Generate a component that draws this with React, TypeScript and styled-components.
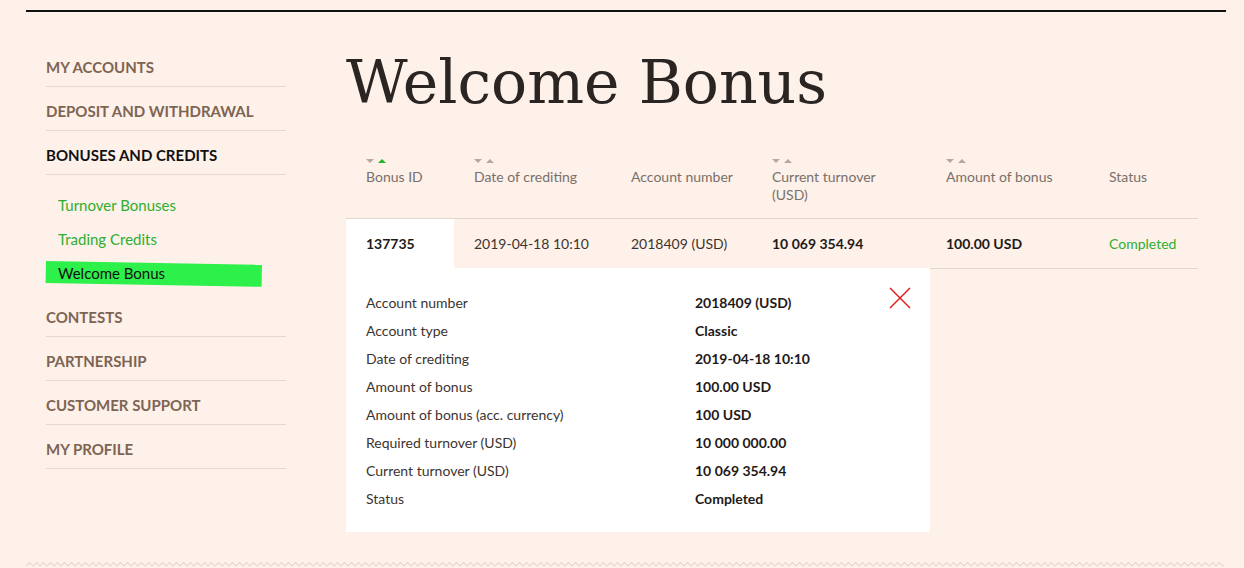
import React from 'react';
import styled, { createGlobalStyle } from 'styled-components';

const GlobalStyle = createGlobalStyle`
    html, body {
        margin: 0;
        background: #fdf1e9;
        font-family: Lato, "Open Sans", sans-serif;
        color: #2b2522;
    }
`;

const Page = styled.div`
    margin: 10px 18px 0 26px;
    border-top: 2px solid #111;
    display: flex;
    flex-direction: column;
`;

const Body = styled.div`
    display: flex;
    padding: 0 0 0 20px;
`;

const Sidebar = styled.nav`
    width: 240px;
    padding-top: 31px;
    flex-shrink: 0;
`;

const MenuItem = styled.div<{ $active?: boolean }>`
    padding: 14px 0 9px;
    line-height: 20px;
    font-size: 15px;
    font-weight: 700;
    text-transform: uppercase;
    color: ${p => (p.$active ? '#111' : '#7d6453')};
    border-bottom: 1px solid #e6d9d0;
`;

const SubMenu = styled.div`
    padding: 13px 0 3px;
`;

const SubItem = styled.div<{ $current?: boolean }>`
    position: relative;
    height: 34px;
    line-height: 34px;
    padding-left: 12px;
    font-size: 15px;
    color: ${p => (p.$current ? '#111' : '#2fae2f')};

    span {
        position: relative;
    }

    ${p =>
        p.$current &&
        `
        &::before {
            content: '';
            position: absolute;
            left: 0;
            top: 5px;
            width: 216px;
            height: 22px;
            background: #2ef04a;
            transform: rotate(1deg);
            transform-origin: left top;
        }
    `}
`;

const Main = styled.main`
    margin-left: 60px;
    width: 852px;
`;

const Title = styled.h1`
    margin: 0;
    padding-top: 30px;
    font-family: "DejaVu Serif", "Liberation Serif", serif;
    font-weight: 400;
    font-size: 60px;
    line-height: 80px;
    color: #2a2523;
`;

const columns = '108px 157px 141px 174px 163px 109px';

const HeadRow = styled.div`
    display: grid;
    grid-template-columns: ${columns};
    padding-top: 34px;
    height: 97px;
    box-sizing: border-box;
    border-bottom: 1px solid #e3d6cd;
`;

const HeadCell = styled.div<{ $narrow?: boolean }>`
    padding-left: 20px;
    font-size: 14px;
    line-height: 18px;
    color: #7a6f69;

    p {
        margin: 0;
        max-width: ${p => (p.$narrow ? '110px' : 'none')};
    }
`;

const Sorter = styled.div`
    display: flex;
    gap: 4px;
    height: 10px;
    margin-bottom: 2px;
    align-items: center;
`;

const Arrow = styled.span<{ $up?: boolean; $on?: boolean }>`
    width: 0;
    height: 0;
    border-left: 4px solid transparent;
    border-right: 4px solid transparent;
    ${p =>
        p.$up
            ? `border-bottom: 4px solid ${p.$on ? '#27b327' : '#b5a8a0'};`
            : `border-top: 4px solid #b5a8a0;`}
`;

const Row = styled.div`
    display: grid;
    grid-template-columns: ${columns};
    height: 49px;
    border-bottom: 1px solid #e3d6cd;
`;

const Cell = styled.div<{ $bold?: boolean; $white?: boolean; $green?: boolean }>`
    padding-left: 20px;
    display: flex;
    align-items: center;
    font-size: 14px;
    font-weight: ${p => (p.$bold ? 700 : 400)};
    color: ${p => (p.$green ? '#2fae2f' : p.$bold ? '#1f1a18' : '#3d3431')};
    background: ${p => (p.$white ? '#fff' : 'transparent')};
`;

const Details = styled.div`
    position: relative;
    width: 584px;
    margin-top: -1px;
    background: #fff;
    padding: 20px 0 20px 20px;
    box-sizing: border-box;
`;

const DetailLine = styled.div`
    display: grid;
    grid-template-columns: 329px 1fr;
    height: 28px;
    align-items: center;
    font-size: 14px;
    color: #3d3431;

    b {
        color: #1f1a18;
    }
`;

const Close = styled.button`
    position: absolute;
    top: 19px;
    right: 19px;
    width: 22px;
    height: 22px;
    padding: 0;
    border: 0;
    background: none;
    cursor: pointer;
`;

const Footer = styled.svg`
    display: block;
    margin-top: 29px;
    width: 1198px;
    height: 6px;
`;

const menuTop = ['My accounts', 'Deposit and withdrawal'];
const menuBottom = ['Contests', 'Partnership', 'Customer support', 'My profile'];

const heads = [
    { label: 'Bonus ID', sort: true, on: true },
    { label: 'Date of crediting', sort: true },
    { label: 'Account number', sort: false },
    { label: 'Current turnover (USD)', sort: true, narrow: true },
    { label: 'Amount of bonus', sort: true },
    { label: 'Status', sort: false },
];

const details: [string, string][] = [
    ['Account number', '2018409 (USD)'],
    ['Account type', 'Classic'],
    ['Date of crediting', '2019-04-18 10:10'],
    ['Amount of bonus', '100.00 USD'],
    ['Amount of bonus (acc. currency)', '100 USD'],
    ['Required turnover (USD)', '10 000 000.00'],
    ['Current turnover (USD)', '10 069 354.94'],
    ['Status', 'Completed'],
];

const App = () => (
    <>
        <GlobalStyle />
        <Page>
            <Body>
                <Sidebar>
                    {menuTop.map(m => (
                        <MenuItem key={m}>{m}</MenuItem>
                    ))}
                    <MenuItem $active>Bonuses and credits</MenuItem>
                    <SubMenu>
                        <SubItem><span>Turnover Bonuses</span></SubItem>
                        <SubItem><span>Trading Credits</span></SubItem>
                        <SubItem $current><span>Welcome Bonus</span></SubItem>
                    </SubMenu>
                    {menuBottom.map(m => (
                        <MenuItem key={m}>{m}</MenuItem>
                    ))}
                </Sidebar>

                <Main>
                    <Title>Welcome Bonus</Title>
                    <HeadRow>
                        {heads.map(h => (
                            <HeadCell key={h.label} $narrow={h.narrow}>
                                <Sorter>
                                    {h.sort && (
                                        <>
                                            <Arrow />
                                            <Arrow $up $on={h.on} />
                                        </>
                                    )}
                                </Sorter>
                                <p>{h.label}</p>
                            </HeadCell>
                        ))}
                    </HeadRow>
                    <Row>
                        <Cell $bold $white>137735</Cell>
                        <Cell>2019-04-18 10:10</Cell>
                        <Cell>2018409 (USD)</Cell>
                        <Cell $bold>10 069 354.94</Cell>
                        <Cell $bold>100.00 USD</Cell>
                        <Cell $green>Completed</Cell>
                    </Row>
                    <Details>
                        {details.map(([k, v]) => (
                            <DetailLine key={k}>
                                <span>{k}</span>
                                <b>{v}</b>
                            </DetailLine>
                        ))}
                        <Close aria-label="Close">
                            <svg width="22" height="22" viewBox="0 0 22 22">
                                <path d="M1 1L21 21M21 1L1 21" stroke="#e0201f" strokeWidth="1.5" />
                            </svg>
                        </Close>
                    </Details>
                </Main>
            </Body>
            {/* zig-zag rule at the foot of the page */}
            <Footer viewBox="0 0 1198 6" preserveAspectRatio="none">
                <defs>
                    <pattern id="zig" width="7" height="6" patternUnits="userSpaceOnUse">
                        <polyline points="0,5 3.5,1.5 7,5" fill="none" stroke="#ebd5ca" strokeWidth="1.2" />
                    </pattern>
                </defs>
                <rect width="1198" height="6" fill="url(#zig)" />
            </Footer>
        </Page>
    </>
);

export default App;
